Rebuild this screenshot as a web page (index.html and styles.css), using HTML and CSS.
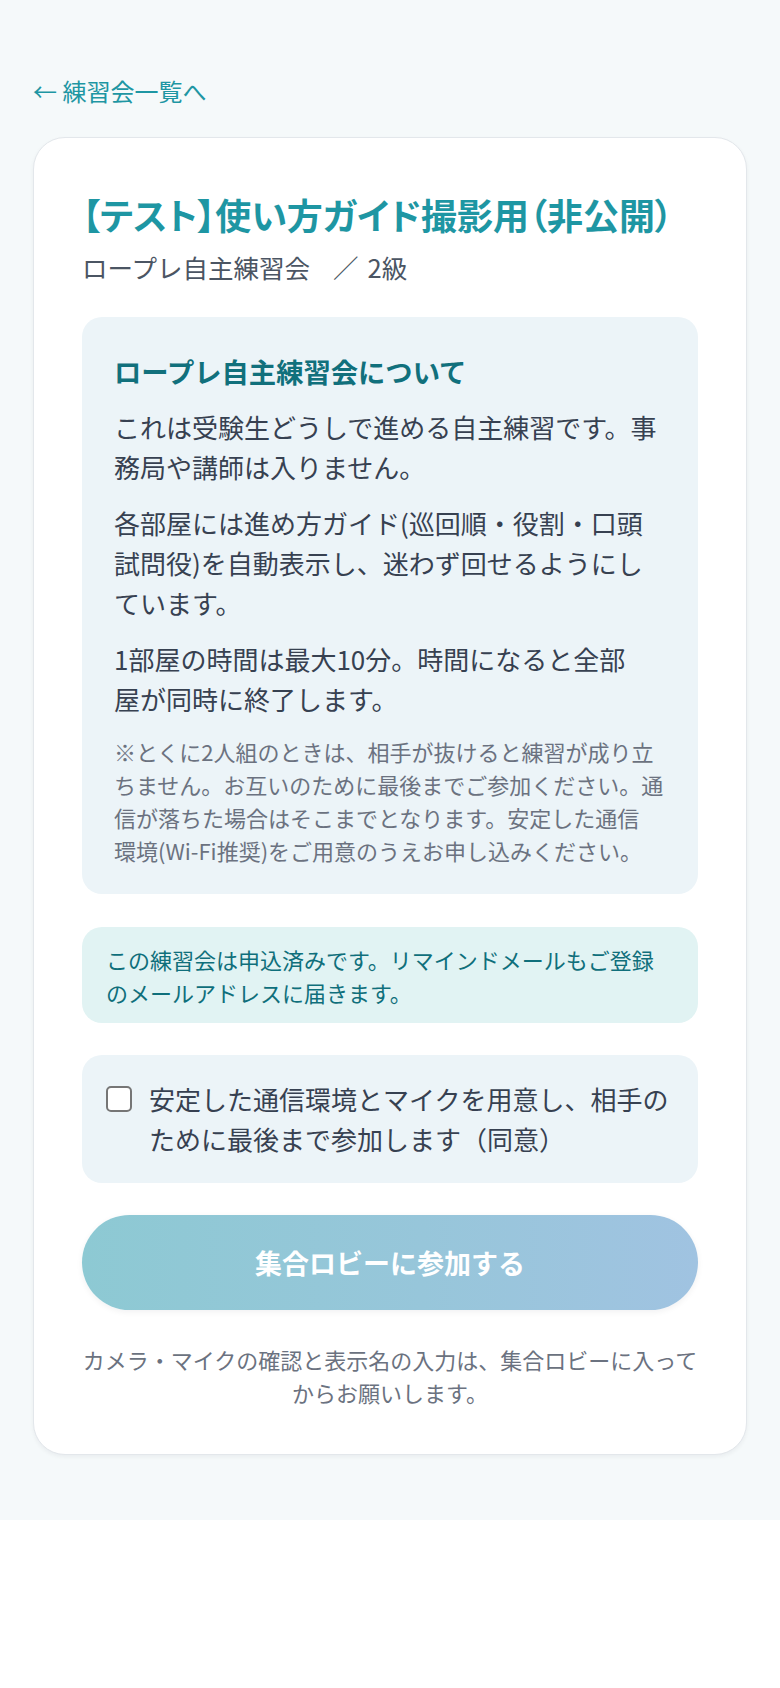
FILE: index.html
```html
<!DOCTYPE html>
<html lang="ja">
<head>
<meta charset="utf-8">
<title>【テスト】使い方ガイド撮影用（非公開）</title>
<link rel="stylesheet" href="styles.css">
</head>
<body>
<div class="page">
  <a class="back" href="#">← 練習会一覧へ</a>
  <section class="card">
    <h1 class="title">【テスト】使い方ガイド撮影用（非公開）</h1>
    <p class="sub">ロープレ自主練習会<span class="sep">／</span>2級</p>
    <div class="info">
      <h2 class="info-head">ロープレ自主練習会について</h2>
      <p class="info-text">これは受験生どうしで進める自主練習です。事務局や講師は入りません。</p>
      <p class="info-text">各部屋には進め方ガイド(巡回順・役割・口頭試問役)を自動表示し、迷わず回せるようにしています。</p>
      <p class="info-text">1部屋の時間は最大10分。時間になると全部<br>屋が同時に終了します。</p>
      <p class="info-note">※とくに2人組のときは、相手が抜けると練習が成り立ちません。お互いのために最後までご参加ください。通信が落ちた場合はそこまでとなります。安定した通信<br>環境(Wi-Fi推奨)をご用意のうえお申し込みください。</p>
    </div>
    <div class="notice">この練習会は申込済みです。リマインドメールもご登録のメールアドレスに届きます。</div>
    <label class="agree">
      <input class="agree-box" type="checkbox">
      <span class="agree-text">安定した通信環境とマイクを用意し、相手のために最後まで参加します（同意）</span>
    </label>
    <button class="join" type="button" disabled>集合ロビーに参加する</button>
    <p class="hint">カメラ・マイクの確認と表示名の入力は、集合ロビーに入ってからお願いします。</p>
  </section>
</div>
</body>
</html>
```

FILE: styles.css
```css
* { box-sizing: border-box; }

html, body {
  margin: 0;
  padding: 0;
  background: #ffffff;
}

body {
  font-family: "Noto Sans CJK JP", "Noto Sans", sans-serif;
  color: #374151;
}

.page {
  background: #f5f9fa;
  padding: 72px 33px 65px;
}

.back {
  display: block;
  font-size: 24px;
  line-height: 38px;
  color: #1e96a3;
  text-decoration: none;
  margin-bottom: 27px;
}

.card {
  background: #ffffff;
  border: 1px solid #e3e7eb;
  border-radius: 32px;
  padding: 48px 48px 45px;
  box-shadow: 0 2px 4px rgba(15, 23, 42, 0.05);
}

.title {
  margin: 0;
  font-size: 36px;
  line-height: 57px;
  font-weight: 700;
  color: #1e96a3;
  font-feature-settings: "palt";
}

.sub {
  margin: 4px 0 0;
  font-size: 25.5px;
  line-height: 40px;
  color: #4b5563;
}

.sep {
  display: inline-block;
  margin: 0 9px 0 23px;
}

.info {
  margin-top: 30px;
  background: #ecf4f8;
  border-radius: 20px;
  padding: 32px 32px 27px;
}

.info-head {
  margin: 0 0 14px;
  font-size: 27.3px;
  line-height: 44px;
  font-weight: 700;
  color: #11707c;
}

.info-text {
  margin: 0 0 16px;
  font-size: 26px;
  line-height: 40px;
  color: #374151;
}

.info-note {
  margin: 15px 0 0;
  font-size: 22px;
  line-height: 33px;
  color: #6b7280;
}

.notice {
  margin-top: 33px;
  background: #e1f3f3;
  border-radius: 20px;
  padding: 16px 24px 14px;
  font-size: 22px;
  line-height: 33px;
  color: #0f6f7b;
}

.agree {
  margin-top: 32px;
  display: flex;
  align-items: flex-start;
  gap: 17px;
  background: #ecf4f8;
  border-radius: 20px;
  padding: 24px;
  cursor: pointer;
}

.agree-box {
  appearance: none;
  -webkit-appearance: none;
  flex: none;
  width: 26px;
  height: 26px;
  margin: 7px 0 0;
  border: 2px solid #767676;
  border-radius: 5px;
  background: #ffffff;
}

.agree-text {
  font-size: 26px;
  line-height: 40px;
  color: #374151;
}

.join {
  display: block;
  width: 100%;
  height: 95px;
  margin-top: 32px;
  border: none;
  border-radius: 48px;
  background: linear-gradient(90deg, #8dc9d3 0%, #97c6da 55%, #a0c3e1 100%);
  color: #ffffff;
  font-family: inherit;
  font-size: 27px;
  font-weight: 700;
  box-shadow: 0 2px 6px rgba(15, 23, 42, 0.06);
}

.hint {
  margin: 33px 0 0;
  font-size: 22px;
  line-height: 33px;
  text-align: center;
  color: #6b7280;
}
```
